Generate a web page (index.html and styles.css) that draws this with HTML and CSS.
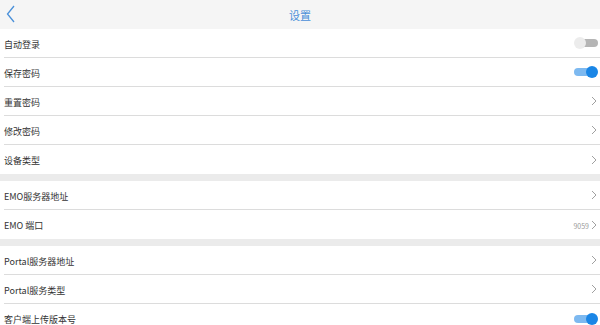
FILE: index.html
```html
<!DOCTYPE html>
<html lang="zh-CN">
<head>
  <meta charset="UTF-8" />
  <meta name="viewport" content="width=device-width, initial-scale=1.0"/>
  <title>设置</title>
  <link rel="stylesheet" href="styles.css">
</head>
<body>
  <div class="header">
    <svg class="back" width="10" height="18" viewBox="0 0 10 18">
      <path d="M8 1 L1.5 9 L8 17" fill="none" stroke="#4a90d9" stroke-width="1.3"/>
    </svg>
    <span class="title">设置</span>
  </div>

  <div class="group">
    <div class="row"><span>自动登录</span><span class="switch"></span></div>
    <div class="row"><span>保存密码</span><span class="switch on"></span></div>
    <div class="row"><span>重置密码</span><svg class="arrow" width="6" height="10" viewBox="0 0 6 10"><path d="M1 1 L5 5 L1 9" /></svg></div>
    <div class="row"><span>修改密码</span><svg class="arrow" width="6" height="10" viewBox="0 0 6 10"><path d="M1 1 L5 5 L1 9" /></svg></div>
    <div class="row"><span>设备类型</span><svg class="arrow" width="6" height="10" viewBox="0 0 6 10"><path d="M1 1 L5 5 L1 9" /></svg></div>
  </div>

  <div class="group">
    <div class="row"><span>EMO服务器地址</span><svg class="arrow" width="6" height="10" viewBox="0 0 6 10"><path d="M1 1 L5 5 L1 9" /></svg></div>
    <div class="row"><span>EMO 端口</span><span class="value">9059<svg class="arrow" width="6" height="10" viewBox="0 0 6 10"><path d="M1 1 L5 5 L1 9" /></svg></span></div>
  </div>

  <div class="group">
    <div class="row"><span>Portal服务器地址</span><svg class="arrow" width="6" height="10" viewBox="0 0 6 10"><path d="M1 1 L5 5 L1 9" /></svg></div>
    <div class="row"><span>Portal服务类型</span><svg class="arrow" width="6" height="10" viewBox="0 0 6 10"><path d="M1 1 L5 5 L1 9" /></svg></div>
    <div class="row"><span>客户端上传版本号</span><span class="switch on"></span></div>
  </div>
</body>
</html>
```

FILE: styles.css
```css
body {
  margin: 0;
  font-family: "Noto Sans CJK SC", "Liberation Sans", sans-serif;
  background-color: #ebebeb;
  color: #333;
  font-size: 9px;
}
.header {
  height: 29px;
  background-color: #f5f5f5;
  display: flex;
  align-items: center;
  justify-content: center;
  position: relative;
}
.back {
  position: absolute;
  left: 6px;
  top: 5px;
}
.title {
  color: #4a90d9;
  font-size: 11px;
  padding-top: 1px;
}
.group {
  background-color: #fff;
  margin-bottom: 7px;
}
.row {
  height: 29px;
  margin-left: 4px;
  padding-right: 2px;
  padding-top: 2px;
  display: flex;
  align-items: center;
  justify-content: space-between;
  border-bottom: 1px solid #dcdcdc;
  box-sizing: border-box;
}
.row:last-child {
  border-bottom: none;
}
.switch {
  width: 24px;
  height: 12px;
  position: relative;
  margin-top: -2px;
}
.switch::before {
  content: "";
  position: absolute;
  left: 2px;
  right: 0;
  top: 2px;
  height: 8px;
  border-radius: 4px;
  background-color: #b5b5b5;
}
.switch::after {
  content: "";
  position: absolute;
  left: 0;
  top: 0;
  width: 12px;
  height: 12px;
  border-radius: 50%;
  background-color: #ececec;
}
.switch.on::before {
  background-color: #7db9f0;
  right: 2px;
  left: 0;
}
.switch.on::after {
  left: auto;
  right: 0;
  background-color: #1a86e6;
}
.arrow {
  fill: none;
  stroke: #a0a0a0;
  stroke-width: 1;
  margin-right: 1px;
  margin-top: -2px;
}
.value {
  display: flex;
  align-items: center;
  gap: 2px;
  font-size: 7px;
  color: #999;
}
```
